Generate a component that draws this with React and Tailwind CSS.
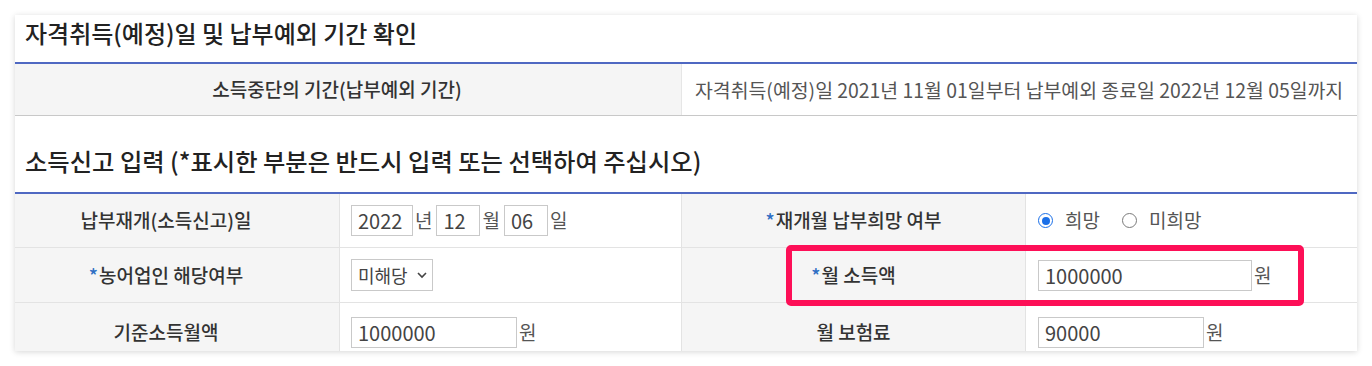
import React from "react";

const FONT = { fontFamily: '"Noto Sans CJK KR", "Noto Sans", sans-serif' };

function Star() {
  return <span className="text-[#2f6fc4] mr-[1px]">*</span>;
}

function Input({ value, w }) {
  return (
    <input
      defaultValue={value}
      className={`h-[31px] ${w} border border-[#c9c9c9] bg-white px-[6px] text-[20px] text-[#444] outline-none`}
      style={FONT}
    />
  );
}

function Radio({ checked, label }) {
  return (
    <label className="flex items-center gap-[12px]">
      <span
        className={`flex h-[15px] w-[15px] items-center justify-center rounded-full border-[1.5px] ${
          checked ? "border-[#1a6fe8]" : "border-[#7a7a7a]"
        } bg-white`}
      >
        {checked && <span className="h-[8px] w-[8px] rounded-full bg-[#1a6fe8]" />}
      </span>
      <span className="text-[19px] text-[#555]">{label}</span>
    </label>
  );
}

const labelCls =
  "flex items-center justify-center bg-[#f5f5f5] text-[19px] font-medium text-[#333]";

export default function App() {
  return (
    <div className="min-h-[366px] bg-white pl-[15px] pt-[15px]" style={FONT}>
      <div className="relative h-[336px] w-[1342px] overflow-hidden bg-white shadow-[0_1px_6px_rgba(0,0,0,0.16)]">
        <div className="h-[47px] pl-[10px] text-[24px] font-medium leading-[36px] text-[#222]">
          자격취득(예정)일 및 납부예외 기간 확인
        </div>
        <div className="grid h-[54px] grid-cols-[667px_1fr] border-t-2 border-b border-t-[#4f68c2] border-b-[#c8c8c8]">
          <div className={`${labelCls} border-r border-[#e6e6e6] pr-[22px]`}>소득중단의 기간(납부예외 기간)</div>
          <div className="flex items-center pl-[13px] text-[19.4px] text-[#555]">
            자격취득(예정)일 2021년 11월 01일부터 납부예외 종료일 2022년 12월 05일까지
          </div>
        </div>
        <div className="h-[76px] pl-[10px] pt-[27px] text-[24.3px] font-medium leading-[36px] text-[#222]">
          소득신고 입력 (*표시한 부분은 반드시 입력 또는 선택하여 주십시오)
        </div>
        <div className="grid grid-cols-[325px_342px_344px_331px] grid-rows-[54px_55px_58px] border-t-2 border-[#4f68c2]">
          {/* Row A */}
          <div className={`${labelCls} border-b border-r border-[#e3e3e3] pr-[22px]`}>납부재개(소득신고)일</div>
          <div className="flex items-center gap-[2px] border-b border-r border-[#e3e3e3] pl-[11px] text-[19px] text-[#555]">
            <Input value="2022" w="w-[62px]" />
            <span className="mr-[2px]">년</span>
            <Input value="12" w="w-[44px]" />
            <span className="mr-[2px]">월</span>
            <Input value="06" w="w-[44px]" />
            <span>일</span>
          </div>
          <div className={`${labelCls} border-b border-r border-[#e3e3e3]`}>
            <Star />재개월 납부희망 여부
          </div>
          <div className="flex items-center gap-[22px] border-b border-[#e3e3e3] pl-[12px]">
            <Radio checked label="희망" />
            <Radio label="미희망" />
          </div>
          {/* Row B */}
          <div className={`${labelCls} border-b border-r border-[#e3e3e3] pr-[22px]`}>
            <Star />농어업인 해당여부
          </div>
          <div className="flex items-center border-b border-r border-[#e3e3e3] pl-[11px]">
            <div className="relative">
              <select
                defaultValue="미해당"
                className="h-[32px] w-[82px] appearance-none border border-[#c9c9c9] bg-white pl-[6px] text-[18px] text-[#444] outline-none"
                style={FONT}
              >
                <option>미해당</option>
                <option>해당</option>
              </select>
              <svg
                className="pointer-events-none absolute right-[5px] top-[12px]"
                width="12"
                height="8"
                viewBox="0 0 12 8"
                fill="none"
              >
                <path d="M2 2 L6 6 L10 2" stroke="#444" strokeWidth="1.6" />
              </svg>
            </div>
          </div>
          <div className={`${labelCls} border-b border-r border-[#e3e3e3]`}>
            <Star />월 소득액
          </div>
          <div className="flex items-center gap-[2px] border-b border-[#e3e3e3] pl-[12px] text-[19px] text-[#555]">
            <Input value="1000000" w="w-[214px]" />
            <span>원</span>
          </div>
          {/* Row C */}
          <div className={`${labelCls} border-r border-[#e3e3e3] pr-[22px]`}>기준소득월액</div>
          <div className="flex items-center gap-[2px] border-r border-[#e3e3e3] pl-[11px] text-[19px] text-[#555]">
            <Input value="1000000" w="w-[166px]" />
            <span>원</span>
          </div>
          <div className={`${labelCls} border-r border-[#e3e3e3]`}>월 보험료</div>
          <div className="flex items-center gap-[2px] pl-[12px] text-[19px] text-[#555]">
            <Input value="90000" w="w-[166px]" />
            <span>원</span>
          </div>
        </div>
        <div className="pointer-events-none absolute left-[771px] top-[230px] h-[61px] w-[518px] rounded-[5px] border-[6px] border-[#fd0f57]" />
      </div>
    </div>
  );
}
